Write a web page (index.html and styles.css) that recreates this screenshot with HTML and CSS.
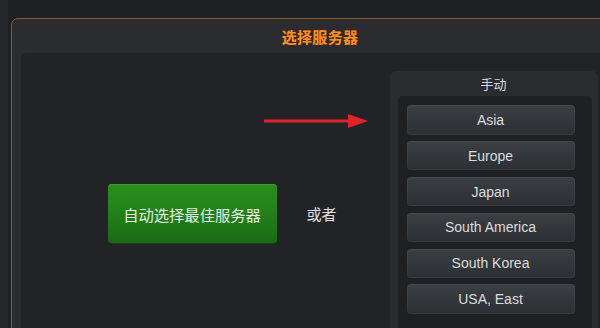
FILE: index.html
```html
<!DOCTYPE html>
<html lang="zh">
<head>
<meta charset="utf-8">
<link rel="stylesheet" href="styles.css">
</head>
<body>
<div class="frame">
  <div class="panel">
    <div class="title">选择服务器</div>
    <div class="content">
      <div class="auto">
        <button class="green">自动选择最佳服务器</button>
        <span class="or">或者</span>
        <svg class="arrow" width="106" height="14" viewBox="0 0 106 14">
          <line x1="0" y1="7" x2="88" y2="7" stroke="#e0242a" stroke-width="3"/>
          <polygon points="84,0 104,7 84,14" fill="#e0242a"/>
        </svg>
      </div>
      <div class="manual">
        <div class="mtitle">手动</div>
        <div class="list">
          <div class="srv">Asia</div>
          <div class="srv">Europe</div>
          <div class="srv">Japan</div>
          <div class="srv">South America</div>
          <div class="srv">South Korea</div>
          <div class="srv">USA, East</div>
        </div>
      </div>
    </div>
  </div>
</div>
</body>
</html>
```
FILE: styles.css
```css
html, body {
  margin: 0;
  padding: 0;
  width: 600px;
  height: 328px;
  overflow: hidden;
  background: #1f2023;
  font-family: "Liberation Sans", "Noto Sans CJK SC", sans-serif;
}
.frame {
  padding: 18px 0 0 11px;
  height: 310px;
  background: linear-gradient(90deg, #25262a 0, #25262a 8px, #1f2023 8px);
}
.panel {
  margin-right: -29px;
  height: 320px;
  border: 1.5px solid #8a5a2e;
  border-radius: 7px;
  background: #2b2c30;
  display: flex;
  flex-direction: column;
}
.title {
  height: 34px;
  display: flex;
  align-items: center;
  justify-content: center;
  color: #ff8f24;
  font-family: "Noto Sans CJK SC", sans-serif;
  font-weight: 700;
  font-size: 15px;
  letter-spacing: 0.3px;
  text-shadow: 0 0 1px #6b3200;
}
.content {
  flex: 1;
  margin-left: 8.5px;
  background: #222327;
  border-radius: 6px 0 0 0;
  display: flex;
  position: relative;
}
.auto {
  width: 369px;
  display: flex;
  align-items: center;
  align-self: flex-start;
  margin-top: 131px;
  padding-left: 87px;
  gap: 30px;
  box-sizing: border-box;
}
.green {
  width: 169px;
  height: 59px;
  border: none;
  border-radius: 4px;
  background: linear-gradient(180deg, #2a8e1c 0%, #22801a 50%, #1b6a14 100%);
  box-shadow: 0 1px 0 #163f12, inset 0 1px 0 #3aa02a;
  color: #e6eee2;
  font-family: "Noto Sans CJK SC", sans-serif;
  font-size: 15.3px;
  padding: 0;
}
.or {
  color: #e0e0e0;
  font-family: "Noto Sans CJK SC", sans-serif;
  font-size: 15px;
}
.arrow {
  position: absolute;
  left: 243px;
  top: 61px;
}
.manual {
  margin-top: 18px;
  width: 208px;
  background: #2b2c30;
  border-radius: 6px 6px 0 0;
  display: flex;
  flex-direction: column;
}
.mtitle {
  height: 25px;
  display: flex;
  align-items: center;
  justify-content: center;
  color: #d8d8d8;
  font-family: "Noto Sans CJK SC", sans-serif;
  font-size: 13px;
}
.list {
  margin: 0 6px 0 8px;
  flex: 1;
  background: #1f2023;
  border-radius: 5px;
  padding: 9px 17px 8px 9px;
  display: flex;
  flex-direction: column;
  gap: 6.4px;
}
.srv {
  height: 29.5px;
  border-radius: 4px;
  background: linear-gradient(180deg, #3b4045 0%, #33373b 50%, #2c3034 100%);
  box-shadow: inset 0 0 0 1px rgba(255,255,255,0.05);
  color: #dcdcdc;
  font-size: 14px;
  display: flex;
  align-items: center;
  justify-content: center;
}
```
